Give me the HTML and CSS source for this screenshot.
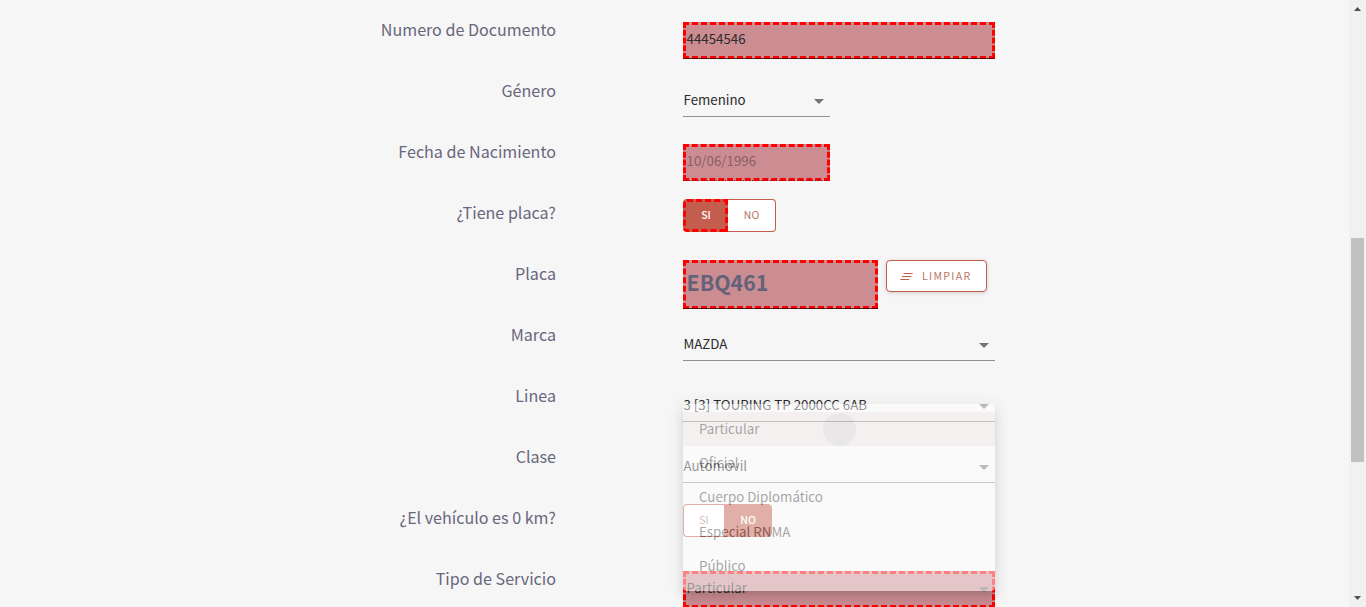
FILE: index.html
```html
<!DOCTYPE html>
<html lang="es">
<head>
<meta charset="utf-8">
<title>Formulario</title>
<link rel="stylesheet" href="styles.css">
</head>
<body>
<main class="page">
  <form class="form">
    <div class="row"><label class="label">Numero de Documento</label><div class="field marked"><span class="value">44454546</span></div></div>
    <div class="row"><label class="label">Género</label><div class="field narrow"><span class="value">Femenino</span><i class="arrow"></i></div></div>
    <div class="row"><label class="label">Fecha de Nacimiento</label><div class="field narrow marked disabled"><span class="value">10/06/1996</span></div></div>
    <div class="row"><label class="label">¿Tiene placa?</label><div class="toggle"><span class="option on outlined">SI</span><span class="option off last">NO</span></div></div>
    <div class="row"><label class="label">Placa</label>
      <div class="plate-group">
        <div class="field plate marked"><span class="value">EBQ461</span></div>
        <button type="button" class="clear"><svg class="clear-icon" width="14" height="8" viewBox="0 0 14 8"><path d="M3.6 1.5h9M2 4.5h9.4M.3 7.5h9"/></svg><span class="clear-text">LIMPIAR</span></button>
      </div>
    </div>
    <div class="row"><label class="label">Marca</label><div class="field"><span class="value">MAZDA</span><i class="arrow"></i></div></div>
    <div class="row"><label class="label">Linea</label><div class="field"><span class="value">3 [3] TOURING TP 2000CC 6AB</span><i class="arrow"></i></div></div>
    <div class="row"><label class="label">Clase</label><div class="field"><span class="value">Automovil</span><i class="arrow"></i></div></div>
    <div class="row"><label class="label">¿El vehículo es 0 km?</label><div class="toggle"><span class="option off first">SI</span><span class="option on end">NO</span></div></div>
    <div class="row"><label class="label">Tipo de Servicio</label><div class="field marked"><span class="value">Particular</span><i class="arrow"></i></div></div>
  </form>
  <div class="menu">
    <div class="item selected">Particular<i class="ripple"></i></div>
    <div class="item">Oficial</div>
    <div class="item">Cuerpo Diplomático</div>
    <div class="item">Especial RNMA</div>
    <div class="item">Público</div>
  </div>
  <div class="scrollbar"><i class="up"></i><i class="thumb"></i><i class="down"></i></div>
</main>
</body>
</html>
```
FILE: styles.css
```css
* { box-sizing: border-box; }
body {
  margin: 0;
  background: #f6f6f6;
  font-family: "Noto Sans CJK SC", "Noto Sans", sans-serif;
  color: #2b2b2b;
}
.page {
  position: relative;
  height: 607px;
  overflow: hidden;
}
.form { width: 995px; }
.row {
  display: grid;
  grid-template-columns: 556px 312px;
  column-gap: 127px;
  height: 61px;
  align-items: start;
}
.label {
  padding-top: 17px;
  text-align: right;
  font-size: 16.1px;
  line-height: 24px;
  color: #68677c;
  white-space: nowrap;
}
.field {
  position: relative;
  display: flex;
  justify-content: space-between;
  height: 34px;
  margin-top: 22px;
  padding: 0 6px 0 .5px;
  font-size: 13.3px;
  line-height: 34px;
  white-space: nowrap;
}
.field::after {
  content: "";
  position: absolute;
  left: 0;
  right: 0;
  bottom: 0;
  height: 1px;
  background: #919191;
}
.field:not(.marked) { height: 38px; margin-top: 18px; }
.field:not(.marked) .value { padding-top: 4px; }
.field:not(.marked) .arrow { margin-top: 20px; }
.narrow { width: 147px; }
.marked {
  height: 37px;
  border: 3px dashed #f00;
  background: #cb8d92;
  padding: 0 3px 0 .6px;
  line-height: 28px;
}
.marked::after {
  left: -3px;
  right: -3px;
  bottom: -3px;
  background: rgba(40, 0, 0, .72);
}
.marked.disabled::after {
  background: repeating-linear-gradient(90deg, #711 0 1px, transparent 1px 3px);
}
.disabled { color: #8b5d65; }
.arrow {
  margin-top: 13px;
  width: 10px;
  height: 5px;
  background: #757575;
  clip-path: polygon(0 0, 100% 0, 50% 100%);
}
.toggle {
  display: flex;
  height: 33px;
  margin-top: 16px;
  font-size: 10.5px;
  font-weight: 500;
  line-height: 29px;
  text-align: center;
}
.option { border: 1px solid #c35e4e; }
.on { width: 48px; background: #c35e4e; color: #fff; }
.off { background: #fff; color: #b57368; font-weight: 400; }
.outlined {
  width: 45px;
  padding-left: 1px;
  border: 3px dashed #f00;
  border-radius: 4px 0 0 4px;
  line-height: 25px;
}
.last { width: 48px; border-left: 0; border-radius: 0 4px 4px 0; }
.first { width: 41px; border-right: 0; border-radius: 4px 0 0 4px; }
.end { border-radius: 0 4px 4px 0; }
.plate-group { display: flex; gap: 8px; margin-top: 16px; }
.plate {
  width: 195px;
  height: 49px;
  margin: 0;
  color: #63627a;
  font-size: 21.3px;
  font-weight: 600;
  line-height: 38px;
}
.clear {
  display: flex;
  align-items: center;
  width: 101px;
  height: 32px;
  padding: 0 0 0 13px;
  gap: 8px;
  border: 1px solid #c35e4e;
  border-radius: 4px;
  background: #fff;
  box-shadow: 0 1px 4px rgba(0, 0, 0, .16);
  color: #bd7465;
  font: 10.6px "Noto Sans CJK SC", sans-serif;
  letter-spacing: 1.3px;
}
.clear-text { padding-bottom: 2px; }
.clear-icon { fill: none; stroke: #c35e4e; stroke-width: 1.2; }
.menu {
  position: absolute;
  left: 683px;
  top: 404px;
  width: 312px;
  height: 187px;
  padding-top: 8px;
  border-radius: 4px;
  background: #fff;
  box-shadow: 0 5px 5px -3px rgba(0, 0, 0, .2), 0 8px 10px 1px rgba(0, 0, 0, .14), 0 3px 14px 2px rgba(0, 0, 0, .12);
  opacity: .5;
  font-size: 13.3px;
  line-height: 33.6px;
  color: #555;
}
.item { position: relative; height: 34.2px; padding-left: 16px; }
.selected { background: #f3eceb; }
.ripple {
  position: absolute;
  left: 140px;
  top: 1px;
  width: 33px;
  height: 33px;
  border-radius: 50%;
  background: #dedad9;
}
.scrollbar {
  position: absolute;
  right: 0;
  top: 0;
  width: 17px;
  height: 607px;
  padding: 7px 0 7px 2px;
  display: flex;
  flex-direction: column;
  background: #f1f1f1;
}
.up, .down {
  width: 7px;
  height: 4px;
  margin-left: 3px;
  background: #505050;
  clip-path: polygon(50% 0, 100% 100%, 0 100%);
}
.down { margin-top: auto; clip-path: polygon(0 0, 100% 0, 50% 100%); }
.thumb { width: 13px; height: 224px; margin-top: 227px; background: #c1c1c1; }
```
